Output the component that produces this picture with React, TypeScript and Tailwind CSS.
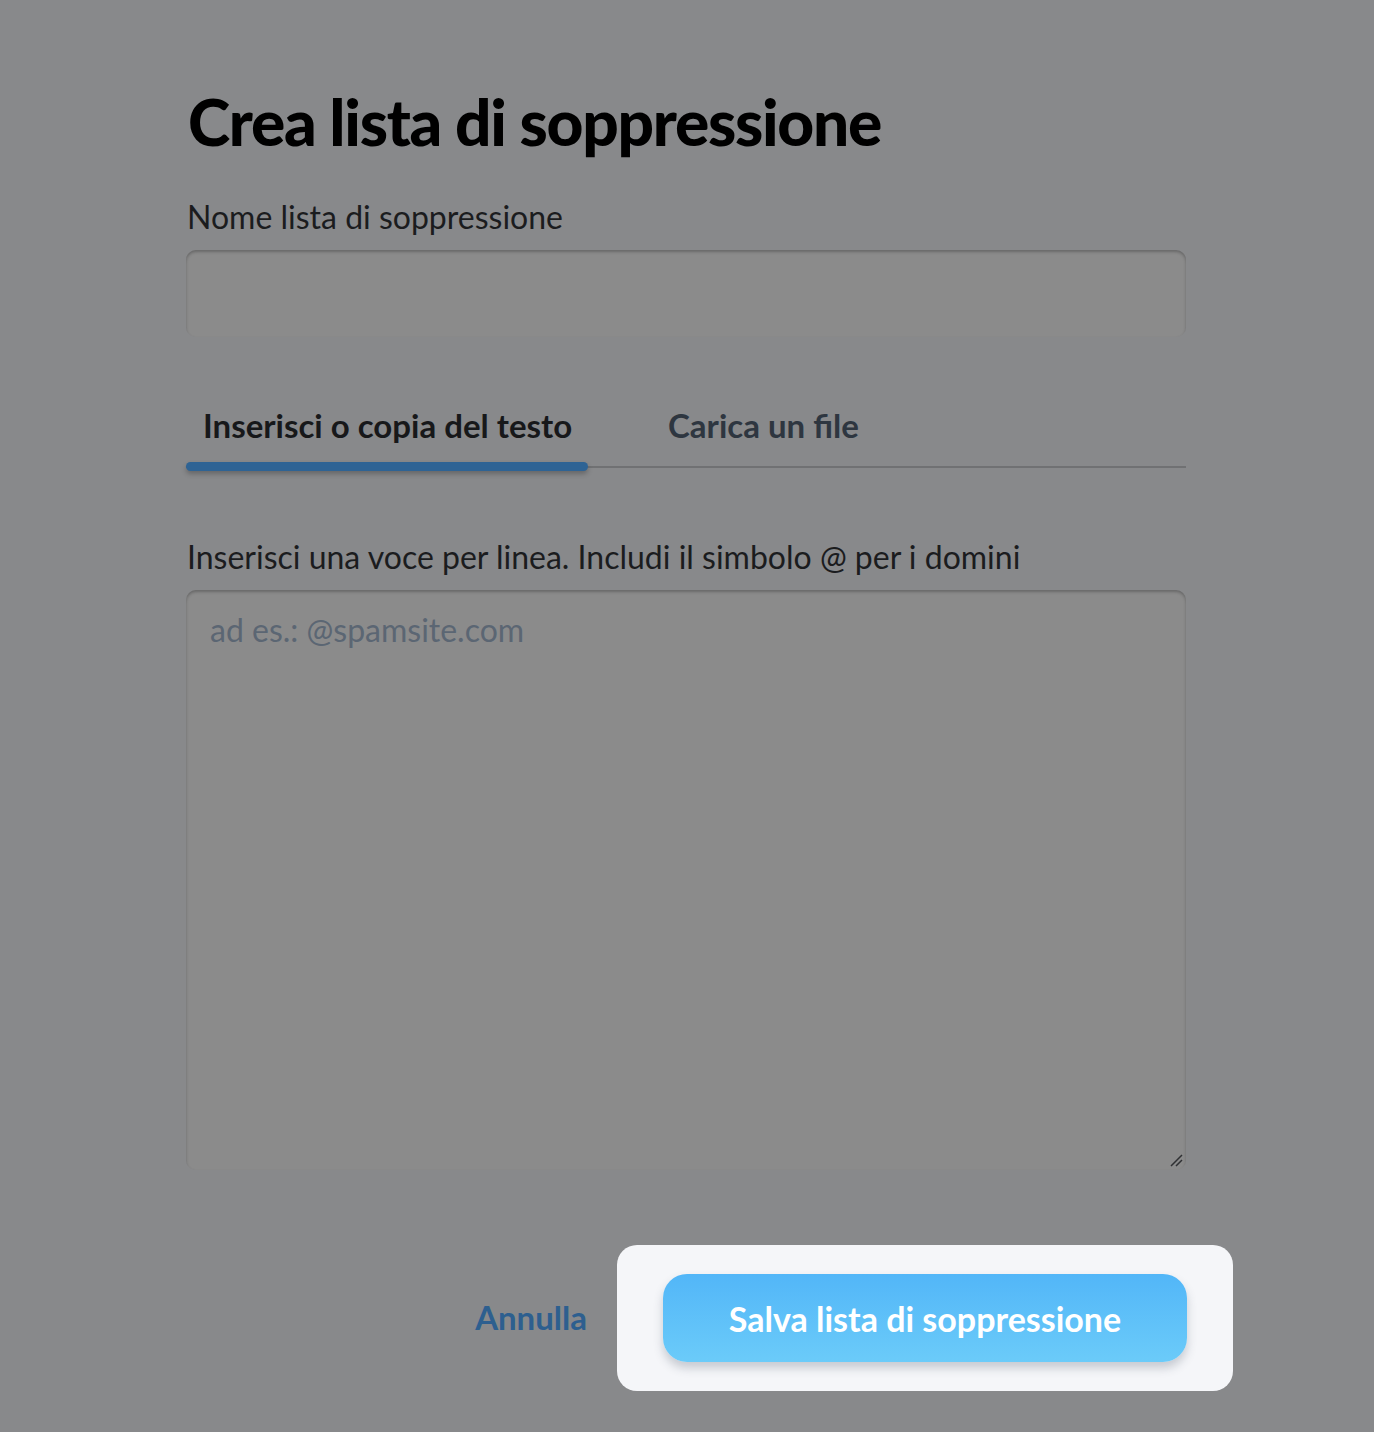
import React from 'react';

const font = { fontFamily: 'Lato, "Noto Sans", sans-serif' };

export default function App() {
  return (
    <div className="min-h-[1432px] w-full bg-[#88898b]" style={font}>
      <div className="ml-[186px] w-[1000px] pt-[82px]">
        {/* Title */}
        <h1 className="text-[64px] font-black leading-[80px] tracking-[-0.02em] text-black pl-[2px]">
          Crea lista di soppressione
        </h1>

        {/* Name field */}
        <label className="mt-[35px] block text-[32px] leading-[40px] text-[#1b1c1e] pl-[1px]">
          Nome lista di soppressione
        </label>
        <div className="mt-[13px] h-[87px] w-full rounded-[10px] bg-[#8b8b8b] shadow-[inset_0_2px_3px_rgba(0,0,0,0.25)]" />

        {/* Tabs */}
        <div className="mt-[68px] flex items-end border-b-2 border-[#707173]">
          <div className="relative w-[402px] pb-[21px] pl-[17px]">
            <span className="text-[33px] font-bold leading-[40px] text-[#17181a]">
              Inserisci o copia del testo
            </span>
            <div className="absolute -bottom-[5px] left-0 h-[9px] w-full rounded-full bg-[#2e6394] shadow-[0_3px_5px_rgba(0,0,0,0.25)]" />
          </div>
          <div className="pb-[21px] pl-[80px]">
            <span className="text-[33px] font-bold leading-[40px] text-[#2e3640]">
              Carica un file
            </span>
          </div>
        </div>

        {/* Textarea */}
        <label className="mt-[69px] block text-[32px] leading-[40px] text-[#1b1c1e] pl-[1px]">
          Inserisci una voce per linea. Includi il simbolo @ per i domini
        </label>
        <div className="relative mt-[13px] h-[580px] w-full rounded-[10px] bg-[#8b8b8b] px-[24px] pt-[20px] shadow-[inset_0_2px_3px_rgba(0,0,0,0.25)]">
          <span className="text-[32px] leading-[40px] text-[#5b6673]">ad es.: @spamsite.com</span>
          <svg className="absolute bottom-[2px] right-[2px]" width="14" height="14" viewBox="0 0 14 14">
            <path d="M1 12 L12 1 M6 12 L12 6" stroke="#2f3033" strokeWidth="1.5" />
          </svg>
        </div>

        {/* Footer */}
        <div className="mt-[75px] flex items-center justify-end">
          <button className="mr-[30px] text-[33px] font-bold text-[#2d5f8f]">Annulla</button>
          <div className="-mr-[47px] rounded-[20px] bg-[#f5f6f9] px-[46px] py-[29px]">
            <button className="h-[88px] w-[524px] rounded-[24px] bg-gradient-to-b from-[#52b6f8] to-[#6bcbf9] text-[34px] font-bold text-white shadow-[0_6px_10px_rgba(60,70,90,0.25)]">
              Salva lista di soppressione
            </button>
          </div>
        </div>
      </div>
    </div>
  );
}
